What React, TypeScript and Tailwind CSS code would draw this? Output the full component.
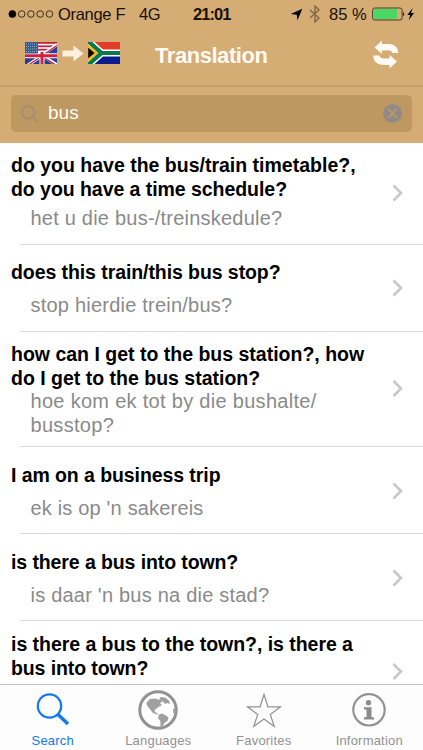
import React from "react";

type Line = { t: string; c: string };
type Entry = { h: string; title: Line[]; sub: Line[]; pt: string; gap: string; arrow: string };

const entries: Entry[] = [
  {
    h: "h-[102px]", pt: "pt-[11px]", gap: "mt-[6px]", arrow: "pt-[41px]",
    title: [{ t: "do you have the bus/train timetable?,", c: "" }, { t: "do you have a time schedule?", c: "tracking-[-0.05px]" }],
    sub: [{ t: "het u die bus-/treinskedule?", c: "tracking-[0.22px]" }],
  },
  {
    h: "h-[87px]", pt: "pt-[16px]", gap: "mt-[9px]", arrow: "pt-[34px]",
    title: [{ t: "does this train/this bus stop?", c: "tracking-[-0.08px]" }],
    sub: [{ t: "stop hierdie trein/bus?", c: "tracking-[0.22px]" }],
  },
  {
    h: "h-[115px]", pt: "pt-[11px]", gap: "mt-0", arrow: "pt-[47.5px]",
    title: [{ t: "how can I get to the bus station?, how", c: "" }, { t: "do I get to the bus station?", c: "" }],
    sub: [{ t: "hoe kom ek tot by die bushalte/", c: "tracking-[0.3px]" }, { t: "busstop?", c: "tracking-[0.3px]" }],
  },
  {
    h: "h-[87px]", pt: "pt-[17px]", gap: "mt-[9px]", arrow: "pt-[35px]",
    title: [{ t: "I am on a business trip", c: "tracking-[-0.08px]" }],
    sub: [{ t: "ek is op 'n sakereis", c: "tracking-[0.18px]" }],
  },
  {
    h: "h-[87px]", pt: "pt-[17px]", gap: "mt-[9px]", arrow: "pt-[35px]",
    title: [{ t: "is there a bus into town?", c: "tracking-[-0.1px]" }],
    sub: [{ t: "is daar 'n bus na die stad?", c: "tracking-[0.22px]" }],
  },
  {
    h: "h-[87px]", pt: "pt-[12px]", gap: "mt-[9px]", arrow: "pt-[41.5px]",
    title: [{ t: "is there a bus to the town?, is there a", c: "tracking-[-0.04px]" }, { t: "bus into town?", c: "tracking-[-0.1px]" }],
    sub: [],
  },
];

function Row({ e }: { e: Entry }) {
  return (
    <div className={`flex shrink-0 flex-col ${e.h}`}>
      <div className="flex min-h-0 flex-1">
        <div className={`w-[388px] shrink-0 pl-[11px] whitespace-nowrap ${e.pt}`}>
          {e.title.map((l) => (
            <div key={l.t} className={`h-[23.5px] text-[19.5px] leading-[23.5px] font-bold text-black ${l.c}`}>{l.t}</div>
          ))}
          <div className={`pl-[19.5px] ${e.gap}`}>
            {e.sub.map((l) => (
              <div key={l.t} className={`h-[23.5px] text-[20px] leading-[23.5px] text-[#8a8a8a] ${l.c}`}>{l.t}</div>
            ))}
          </div>
        </div>
        <svg className={`box-content shrink-0 ${e.arrow}`} width="18" height="18" viewBox="0 0 18 18" fill="none" stroke="#c7c7cc" strokeWidth="2.6">
          <path d="M5.500 1.500 13 9l-7.500 7.500" />
        </svg>
      </div>
      <div className="ml-[20px] h-px bg-[#d9d9da]" />
    </div>
  );
}

function UsUkFlag() {
  return (
    <svg width="32" height="22" viewBox="0 0 32 22">
      <rect width="32" height="22" fill="#fff" />
      {[0, 3.4, 6.8].map((y) => <rect key={y} x="12" y={y} width="20" height="1.8" fill="#c9203f" />)}
      <path d="M32 4v18H0v-7h14z" fill="#24408f" />
      <path d="M32 2.500 17 13M15 15 3 23M18 14l14 9" stroke="#fff" strokeWidth="3.200" />
      <path d="M32 3.500 18 13M14 16 4 22.500M19 15.500 30 22.500" stroke="#cf1f40" strokeWidth="1.400" />
      <path d="M0 13.800h32M17 11V22" stroke="#fff" strokeWidth="5" />
      <path d="M0 13.800h32M17 10V22" stroke="#cf1f40" strokeWidth="3" />
      <rect width="13" height="11.500" fill="#355b8e" />
      <path d="M1 2h12M1 4.500h12M1 7h12M1 9.500h12" stroke="#a9bed6" strokeWidth=".8" strokeDasharray="1 1" />
    </svg>
  );
}

function SaFlag() {
  return (
    <svg width="32" height="22" viewBox="0 0 32 22">
      <rect width="32" height="11" fill="#e23d28" />
      <rect y="11" width="32" height="11" fill="#0c1c8c" />
      <path d="M0-1 13.500 11 0 23M13.500 11H32" fill="none" stroke="#fff" strokeWidth="7.200" />
      <path d="M-1 3v16l9.500-8z" fill="#000" stroke="#ffb81c" strokeWidth="2.400" />
      <path d="M0-1 13.500 11 0 23M13.500 11H32" fill="none" stroke="#087a4b" strokeWidth="4.200" />
    </svg>
  );
}

export default function App() {
  return (
    <div className="flex h-[750px] w-[423px] flex-col overflow-hidden bg-white font-['Liberation_Sans',Arial,sans-serif]">
      <header className="h-[143px] shrink-0 bg-[#d5ac74]">
        <div className="flex h-[28px] items-center whitespace-nowrap text-[16.5px] text-[#18110a]">
          <svg className="ml-[8px]" width="46" height="10" viewBox="0 0 46 10" fill="none" stroke="#18110a" strokeWidth=".8">
            <circle cx="4.400" cy="5" r="3.500" fill="#000" />
            {[13.7, 22.9, 32.2, 41.5].map((x) => <circle key={x} cx={x} cy="5" r="3.300" />)}
          </svg>
          <span className="ml-[4px] w-[81px] tracking-[-0.3px]">Orange F</span>
          <span className="w-[54px] tracking-[-0.4px]">4G</span>
          <span className="w-[97px] font-bold tracking-[-0.95px]">21:01</span>
          <svg width="13" height="13" viewBox="0 0 13 13"><path d="M12.300.7 7.500 12.300 6.700 6.800.8 6z" fill="#000" /></svg>
          <svg className="ml-[6px]" width="12" height="18" viewBox="0 0 12 18" fill="none" stroke="#80694a" strokeWidth="1.400"><path d="m1 5 9 8-4 4V1l4 4-9 8" /></svg>
          <span className="ml-[8px] w-[43px]">85 %</span>
          <svg width="50" height="16" viewBox="0 0 50 16">
            <rect x=".6" y="2" width="29.500" height="12" rx="2.200" fill="none" stroke="#493c29" />
            <rect x="1.700" y="3.100" width="23.300" height="9.800" rx="1" fill="#4bd763" />
            <path d="M31.200 5.700q2 2.300 0 4.600z" fill="#000" />
            <path d="m40.700 2-5.400 7h3l-1.600 5.300L42 7h-3z" fill="#000" />
          </svg>
        </div>
        <div className="flex h-[57px] items-start">
          <div className="ml-[25px] flex items-center pt-[14px]">
            <UsUkFlag />
            <svg className="mx-[4px]" width="23" height="18" viewBox="0 0 23 18"><path d="M1.500 6.500h11V1.500l10 8-10 8v-5h-11z" fill="#fff0dc" /></svg>
            <SaFlag />
          </div>
          <h1 className="ml-[35px] w-[217px] pt-[13px] text-[22px] leading-[30px] font-bold tracking-[-0.45px] whitespace-nowrap text-[#fffaf3]">Translation</h1>
          <svg className="mt-[12px]" width="28" height="29" viewBox="0 0 28 29" fill="#fffaf3">
            <path d="M2.500 7.500 10 .5v3.500h6c6 0 10.300 3 10.300 9h-6.300c0-2-1.500-2.500-4-2.500h-6V14z" />
            <path d="M25 21.500 17.500 28.500v-3.500H12C5.500 25 1.200 21.500 1.200 15.500h6.300c.4 2.200 2 3 4.500 3h5.500v-3.500z" />
          </svg>
        </div>
        <div className="h-[2px] bg-[#c49d68]" />
        <div className="mx-[11px] mt-[8px] flex h-[37px] items-center rounded-[5px] bg-[#be9861] pr-[10px] pl-[10px]">
          <svg width="18" height="18" viewBox="0 0 18 18" fill="none" stroke="#9a8b7c" strokeWidth="1.400"><circle cx="7.300" cy="7.300" r="6.200" /><path d="m11.800 11.800 5 5" /></svg>
          <span className="ml-[9px] flex-1 text-[19px] text-[#fffaf3]">bus</span>
          <svg width="19" height="19" viewBox="0 0 19 19"><circle cx="9.500" cy="9.500" r="9.400" fill="#928a88" /><path d="m5.200 5.200 8.600 8.600m0-8.600-8.600 8.600" stroke="#be9861" strokeWidth="1.700" /></svg>
        </div>
      </header>
      <main className="flex min-h-0 flex-1 flex-col overflow-hidden">
        {entries.map((e) => <Row key={e.title[0].t} e={e} />)}
      </main>
      <nav className="grid h-[66px] shrink-0 grid-cols-4 border-t border-[#c4c4c4] bg-[#fdfdfd] pr-px text-[13px] leading-[16px] text-[#929292]">
        <div className="flex flex-col items-center text-[#1479ee]">
          <svg className="mt-[7px] mb-[5px]" width="34" height="36" viewBox="0 0 34 36" fill="none" stroke="#1479ee"><circle cx="13.500" cy="14" r="11.700" strokeWidth="2.200" /><path d="m22 22.500 10 9.500" strokeWidth="3.400" /></svg>
          <span className="tracking-[0.2px]">Search</span>
        </div>
        <div className="flex flex-col items-center">
          <svg className="mt-[4px] mb-[3px]" width="40" height="41" viewBox="0 0 40 41">
            <circle cx="20" cy="21" r="18.200" fill="#fff" stroke="#929292" strokeWidth="3" />
            <path d="M8.500 13.500 12 10l6-.5 3 1.500 2.500 2-1.500 1.500 2 1.500-3.500 2-2.500 2-1.500 1 .5 2 3.500 2-2 .5-4-2-3-4-2.500-3zM22.500 8l4.500.5 4 3 1 3.500-3-1-2 1-2-2.500-3 .5-1-2zM21 25.500l3-1 4 2 2.500 2-1 3.500-3 2-2 3.500-2-.5-.2-5-2.300-3zM35 20l2.500-1v6l-2-.5z" fill="#a0a0a0" />
          </svg>
          <span className="tracking-[0.2px]">Languages</span>
        </div>
        <div className="flex flex-col items-center">
          <svg className="mt-[7px] mb-[5px]" width="36" height="36" viewBox="0 0 36 36" fill="none" stroke="#929292" strokeWidth="1.200"><path d="m18 2.500 3.900 12.300h12.600L24.300 22.400l4 12.100L18 27 7.700 34.500l4-12.100L1.500 14.800h12.600z" /></svg>
          <span className="tracking-[0.2px]">Favorites</span>
        </div>
        <div className="flex flex-col items-center">
          <svg className="mt-[7px] mb-[5px]" width="36" height="36" viewBox="0 0 36 36"><circle cx="18" cy="17.800" r="15.700" fill="none" stroke="#929292" strokeWidth="2.200" /><circle cx="17.500" cy="10.800" r="2.700" fill="#8b8b8b" /><path d="M13 15.200h7.500V25.200H23v2.300H13v-2.300h2.500v-7.700H13z" fill="#8b8b8b" /></svg>
          <span className="tracking-[0.2px]">Information</span>
        </div>
      </nav>
    </div>
  );
}
